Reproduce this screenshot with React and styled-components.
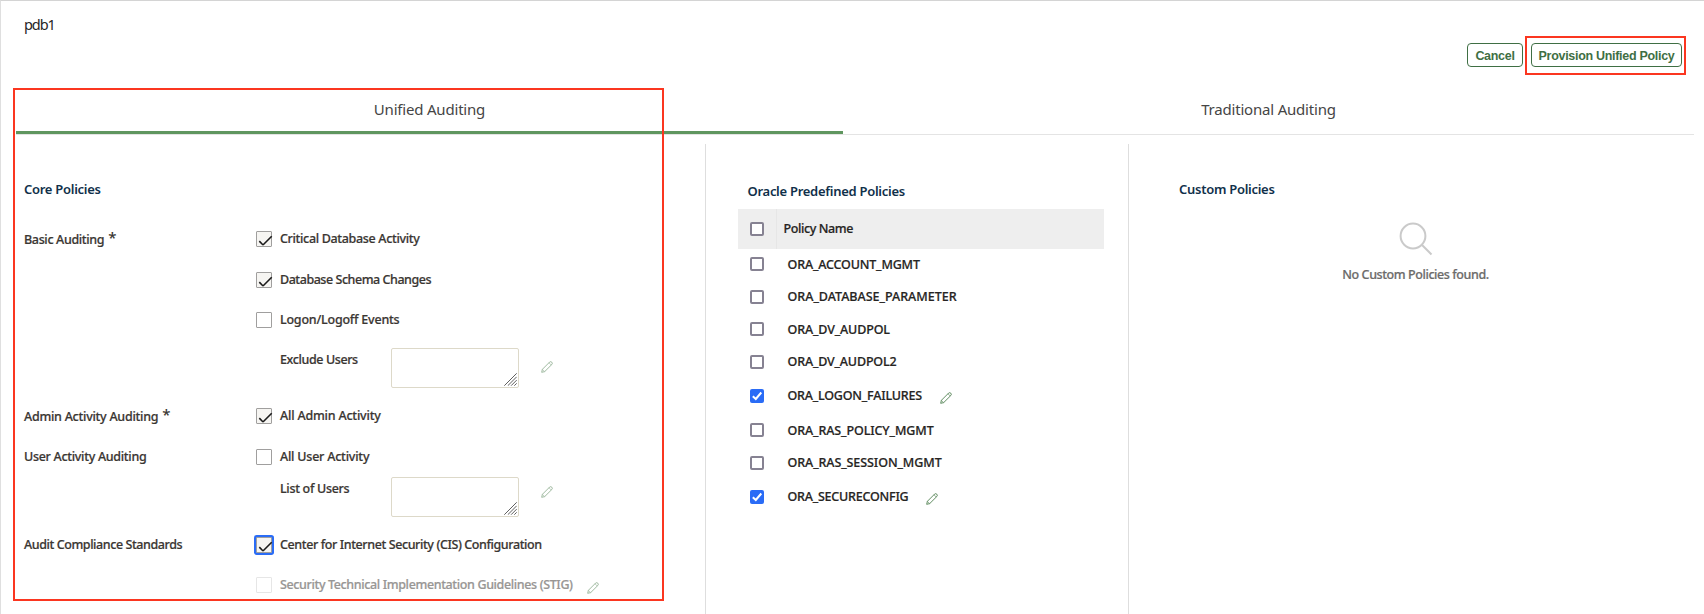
import React from 'react';
import styled, { createGlobalStyle } from 'styled-components';

const GlobalStyle = createGlobalStyle`
  * { box-sizing: border-box; }
  body { margin: 0; background: #fff; overflow: hidden; }
`;

const Page = styled.main`
  position: relative;
  display: flex;
  flex-direction: column;
  width: 1704px;
  height: 614px;
  overflow: hidden;
  border-top: 1px solid #d4d4d4;
  border-left: 1px solid #dfdfdf;
  background: #fff;
  color: #3a3632;
  font-family: "Noto Sans", "Open Sans", sans-serif;
  font-size: 12.5px;
  font-weight: 500;
  line-height: 18px;
  white-space: nowrap;
`;

const Text = styled.span`
  letter-spacing: ${(p) => p.$track || 0}px;
  -webkit-text-stroke: 0.2px currentColor;
`;

const Title = styled.h1`
  flex-shrink: 0;
  margin: 0;
  height: 42px;
  padding: 13px 23px 0;
  color: #262626;
  font-size: 14.5px;
  font-weight: 400;
  line-height: 20px;
  letter-spacing: -1.1px;
`;

const Toolbar = styled.div`
  display: flex;
  flex-shrink: 0;
  justify-content: flex-end;
  gap: 8px;
  height: 48px;
  padding-right: 22px;
`;

const Button = styled.button`
  width: ${(p) => p.$width}px;
  height: 24px;
  padding: 2px 0 0;
  border: 1px solid #3f6f44;
  border-radius: 4px;
  background: #fff;
  color: #3f6f44;
  font: bold 12.5px/20px "Liberation Sans", Arial, sans-serif;
  letter-spacing: ${(p) => p.$track || 0}px;
`;

const Tabs = styled.nav`
  display: flex;
  flex-shrink: 0;
  height: 44px;
  margin: 0 10px 0 15px;
  border-bottom: 1px solid #e4e4e4;
`;

const Tab = styled.div`
  width: ${(p) => p.$width}px;
  height: 43px;
  padding-top: 7px;
  border-bottom: 3px solid ${(p) => (p.$active ? '#5f965f' : 'transparent')};
  color: #454545;
  font-size: 15px;
  font-weight: 400;
  line-height: 22px;
  letter-spacing: -0.2px;
  text-align: center;
`;

const Columns = styled.div`
  display: flex;
  flex: 1;
  min-height: 0;
  margin-top: 9px;
`;

const CoreColumn = styled.section`
  width: 704px;
  padding: 36px 0 0 23px;
`;

const PredefinedColumn = styled.section`
  width: 424px;
  padding: 38px 24px 0 32px;
  border-left: 1px solid #dedede;
  border-right: 1px solid #dedede;
`;

const CustomColumn = styled.section`
  flex: 1;
  padding: 36px 0 0 50px;
`;

const Heading = styled.h2`
  margin: 0 0 0 ${(p) => p.$indent || 0}px;
  color: #10304a;
  font-size: 13px;
  font-weight: 600;
  line-height: 18px;
  letter-spacing: -0.28px;
`;

const Form = styled.div`
  padding-top: 21px;
`;

const FormRow = styled.div`
  display: flex;
  align-items: ${(p) => (p.$top ? 'flex-start' : 'center')};
  height: ${(p) => p.$height}px;
`;

const Label = styled.div`
  display: flex;
  width: 232px;
  padding-top: ${(p) => p.$drop || 0}px;
`;

const Required = styled.span`
  margin: -3px 0 3px 4px;
  font-size: 15px;
`;

const Option = styled.label`
  display: flex;
  align-items: center;
  gap: 8px;
  color: ${(p) => (p.$disabled ? '#989694' : '#3a3632')};
`;

const Box = styled.span`
  width: 16px;
  height: 16px;
  border: 1px solid ${(p) => (p.$disabled ? '#e6e6e6' : '#a09f9e')};
  border-radius: 1px;
  background: ${(p) => (p.$checked ? '#f6f5f2' : '#fff')};
  box-shadow: ${(p) => (p.$focused ? '0 0 0 2px #2a6cf6' : 'none')};

  svg { display: block; margin: -1px; overflow: visible; }
`;

const FieldName = styled.span`
  width: 111px;
  margin-left: 24px;
  padding-top: ${(p) => p.$drop}px;
`;

const Area = styled.span`
  display: flex;
  align-items: flex-end;
  justify-content: flex-end;
  width: 128px;
  height: 40px;
  margin-top: ${(p) => p.$drop}px;
  padding: 1px;
  border: 1px solid #ddd9c9;
  border-radius: 2px;
`;

const Edit = styled.span`
  display: block;
  height: 12px;
  margin: ${(p) => p.$drop}px 0 0 ${(p) => p.$gap}px;
  opacity: ${(p) => (p.$dim ? 0.6 : 1)};

  svg { display: block; }
`;

const TableHead = styled.div`
  display: flex;
  align-items: center;
  height: 40px;
  margin-top: 9px;
  background: #eeeeee;
  color: #262422;
`;

const HeadCheck = styled.div`
  display: flex;
  align-items: center;
  width: 39px;
  height: 40px;
  padding-left: 12px;
  border-right: 1px solid #e6e6e6;
`;

const HeadName = styled.div`
  padding: 0 0 0 6.5px;
`;

const PolicyRow = styled.div`
  display: flex;
  align-items: center;
  height: ${(p) => p.$height}px;
  padding-left: 12px;
  color: #262422;
`;

const PolicyName = styled.span`
  margin: ${(p) => p.$shift || 0}px 0 0 23.5px;
`;

const Check = styled.span`
  width: 14px;
  height: 14px;
  border: ${(p) => (p.$checked ? '0' : '2px solid #868292')};
  border-radius: 2px;
  background: ${(p) => (p.$checked ? '#2a6cf6' : '#fff')};

  svg { display: block; }
`;

const Empty = styled.div`
  display: flex;
  flex-direction: column;
  align-items: center;
  width: 473px;
  padding-top: 24px;
  color: #6c6b6a;

  svg { display: block; margin-bottom: 10px; }
`;

const Callout = styled.div`
  position: absolute;
  left: ${(p) => p.$x}px;
  top: ${(p) => p.$y}px;
  width: ${(p) => p.$w}px;
  height: ${(p) => p.$h}px;
  border: 2px solid #fb3620;
  pointer-events: none;
`;

const Pencil = () => (
  <svg width="12" height="12" viewBox="0 0 12 12" fill="none" stroke="#4f8050" strokeWidth="0.9" strokeLinejoin="round">
    <path d="M.7 11.3 1.4 8.3 8.7 1Q9.7.2 10.8 1.2 11.8 2.3 11 3.3L3.7 10.6Z" />
    <path d="M1.4 8.3 3.7 10.6M8 1.8l2.2 2.2" strokeWidth="0.6" />
  </svg>
);

const Grip = () => (
  <svg width="13" height="13" viewBox="0 0 13 13" stroke="#5f5f5f" strokeWidth="1">
    <path d="M.3 12.7 12.7.3M3.8 12.7l8.9-8.9M7.1 12.7l5.6-5.6M10.3 12.7l2.4-2.4" />
  </svg>
);

const CoreCheck = ({ label, track, checked, focused, disabled }) => (
  <Option $disabled={disabled}>
    <Box $checked={checked} $focused={focused} $disabled={disabled}>
      {checked && (
        <svg width="16" height="16" viewBox="0 0 16 16" fill="none" stroke="#1b1b1b" strokeWidth="1.6">
          <path d="M3.3 10.1 6.3 13.2Q7 13.9 7.7 13.2L15.7 5.2" />
        </svg>
      )}
    </Box>
    <Text $track={track}>{label}</Text>
  </Option>
);

const UserField = ({ label, track, height, nameDrop, areaDrop, editDrop }) => (
  <FormRow $height={height} $top>
    <Label />
    <FieldName $drop={nameDrop}><Text $track={track}>{label}</Text></FieldName>
    <Area $drop={areaDrop}><Grip /></Area>
    <Edit $drop={editDrop} $gap={22} $dim><Pencil /></Edit>
  </FormRow>
);

const PolicyCheck = ({ checked }) => (
  <Check $checked={checked}>
    {checked && (
      <svg width="14" height="14" viewBox="0 0 14 14" fill="none" stroke="#fff" strokeWidth="2">
        <path d="M2.8 7.2 5.8 10 11.3 3.5" />
      </svg>
    )}
  </Check>
);

const policies = [
  { name: 'ORA_ACCOUNT_MGMT', track: -0.16, height: 30, shift: 2 },
  { name: 'ORA_DATABASE_PARAMETER', track: 0, height: 36 },
  { name: 'ORA_DV_AUDPOL', track: -0.13, height: 28, shift: 2 },
  { name: 'ORA_DV_AUDPOL2', track: -0.16, height: 38 },
  { name: 'ORA_LOGON_FAILURES', track: -0.2, height: 30, checked: true, gap: 18 },
  { name: 'ORA_RAS_POLICY_MGMT', track: -0.1, height: 38, shift: 2 },
  { name: 'ORA_RAS_SESSION_MGMT', track: -0.08, height: 28 },
  { name: 'ORA_SECURECONFIG', track: -0.22, height: 40, checked: true, gap: 18 },
];

export default function App() {
  return (
    <Page>
      <GlobalStyle />
      <Title>pdb1</Title>
      <Toolbar>
        <Button $width={56} $track={-0.3}>Cancel</Button>
        <Button $width={151} $track={-0.3}>Provision Unified Policy</Button>
      </Toolbar>
      <Tabs>
        <Tab $width={827} $active>Unified Auditing</Tab>
        <Tab $width={851}>Traditional Auditing</Tab>
      </Tabs>
      <Columns>
        <CoreColumn>
          <Heading>Core Policies</Heading>
          <Form>
            <FormRow $height={40}>
              <Label $drop={2}><Text $track={-0.35}>Basic Auditing</Text><Required>*</Required></Label>
              <CoreCheck label="Critical Database Activity" track={-0.33} checked />
            </FormRow>
            <FormRow $height={42}>
              <Label />
              <CoreCheck label="Database Schema Changes" track={-0.46} checked />
            </FormRow>
            <FormRow $height={38}>
              <Label />
              <CoreCheck label="Logon/Logoff Events" track={-0.22} />
            </FormRow>
            <UserField label="Exclude Users" track={-0.39} height={58} nameDrop={12} areaDrop={9} editDrop={22} />
            <FormRow $height={38}>
              <Label $drop={2}><Text $track={-0.26}>Admin Activity Auditing</Text><Required>*</Required></Label>
              <CoreCheck label="All Admin Activity" track={-0.2} checked />
            </FormRow>
            <FormRow $height={44}>
              <Label><Text $track={-0.3}>User Activity Auditing</Text></Label>
              <CoreCheck label="All User Activity" track={-0.22} />
            </FormRow>
            <UserField label="List of Users" track={-0.31} height={46} nameDrop={1} areaDrop={-2} editDrop={7} />
            <FormRow $height={40}>
              <Label><Text $track={-0.42}>Audit Compliance Standards</Text></Label>
              <CoreCheck label="Center for Internet Security (CIS) Configuration" track={-0.4} checked focused />
            </FormRow>
            <FormRow $height={40}>
              <Label />
              <CoreCheck label="Security Technical Implementation Guidelines (STIG)" track={-0.37} disabled />
              <Edit $drop={5} $gap={14} $dim><Pencil /></Edit>
            </FormRow>
          </Form>
        </CoreColumn>
        <PredefinedColumn>
          <Heading $indent={9.5}>Oracle Predefined Policies</Heading>
          <TableHead>
            <HeadCheck><PolicyCheck /></HeadCheck>
            <HeadName><Text $track={-0.39}>Policy Name</Text></HeadName>
          </TableHead>
          {policies.map((p) => (
            <PolicyRow key={p.name} $height={p.height}>
              <PolicyCheck checked={p.checked} />
              <PolicyName $shift={p.shift}><Text $track={p.track}>{p.name}</Text></PolicyName>
              {p.checked && <Edit $drop={3} $gap={p.gap}><Pencil /></Edit>}
            </PolicyRow>
          ))}
        </PredefinedColumn>
        <CustomColumn>
          <Heading>Custom Policies</Heading>
          <Empty>
            <svg width="34" height="34" viewBox="0 0 34 34" fill="none" stroke="#cacaca" strokeWidth="2">
              <circle cx="14" cy="14" r="12.4" />
              <path d="M22.8 22.8 32.5 32.5" />
            </svg>
            <Text $track={-0.42}>No Custom Policies found.</Text>
          </Empty>
        </CustomColumn>
      </Columns>
      <Callout $x={12} $y={87} $w={651} $h={513} />
      <Callout $x={1524} $y={35} $w={161} $h={39} />
    </Page>
  );
}
